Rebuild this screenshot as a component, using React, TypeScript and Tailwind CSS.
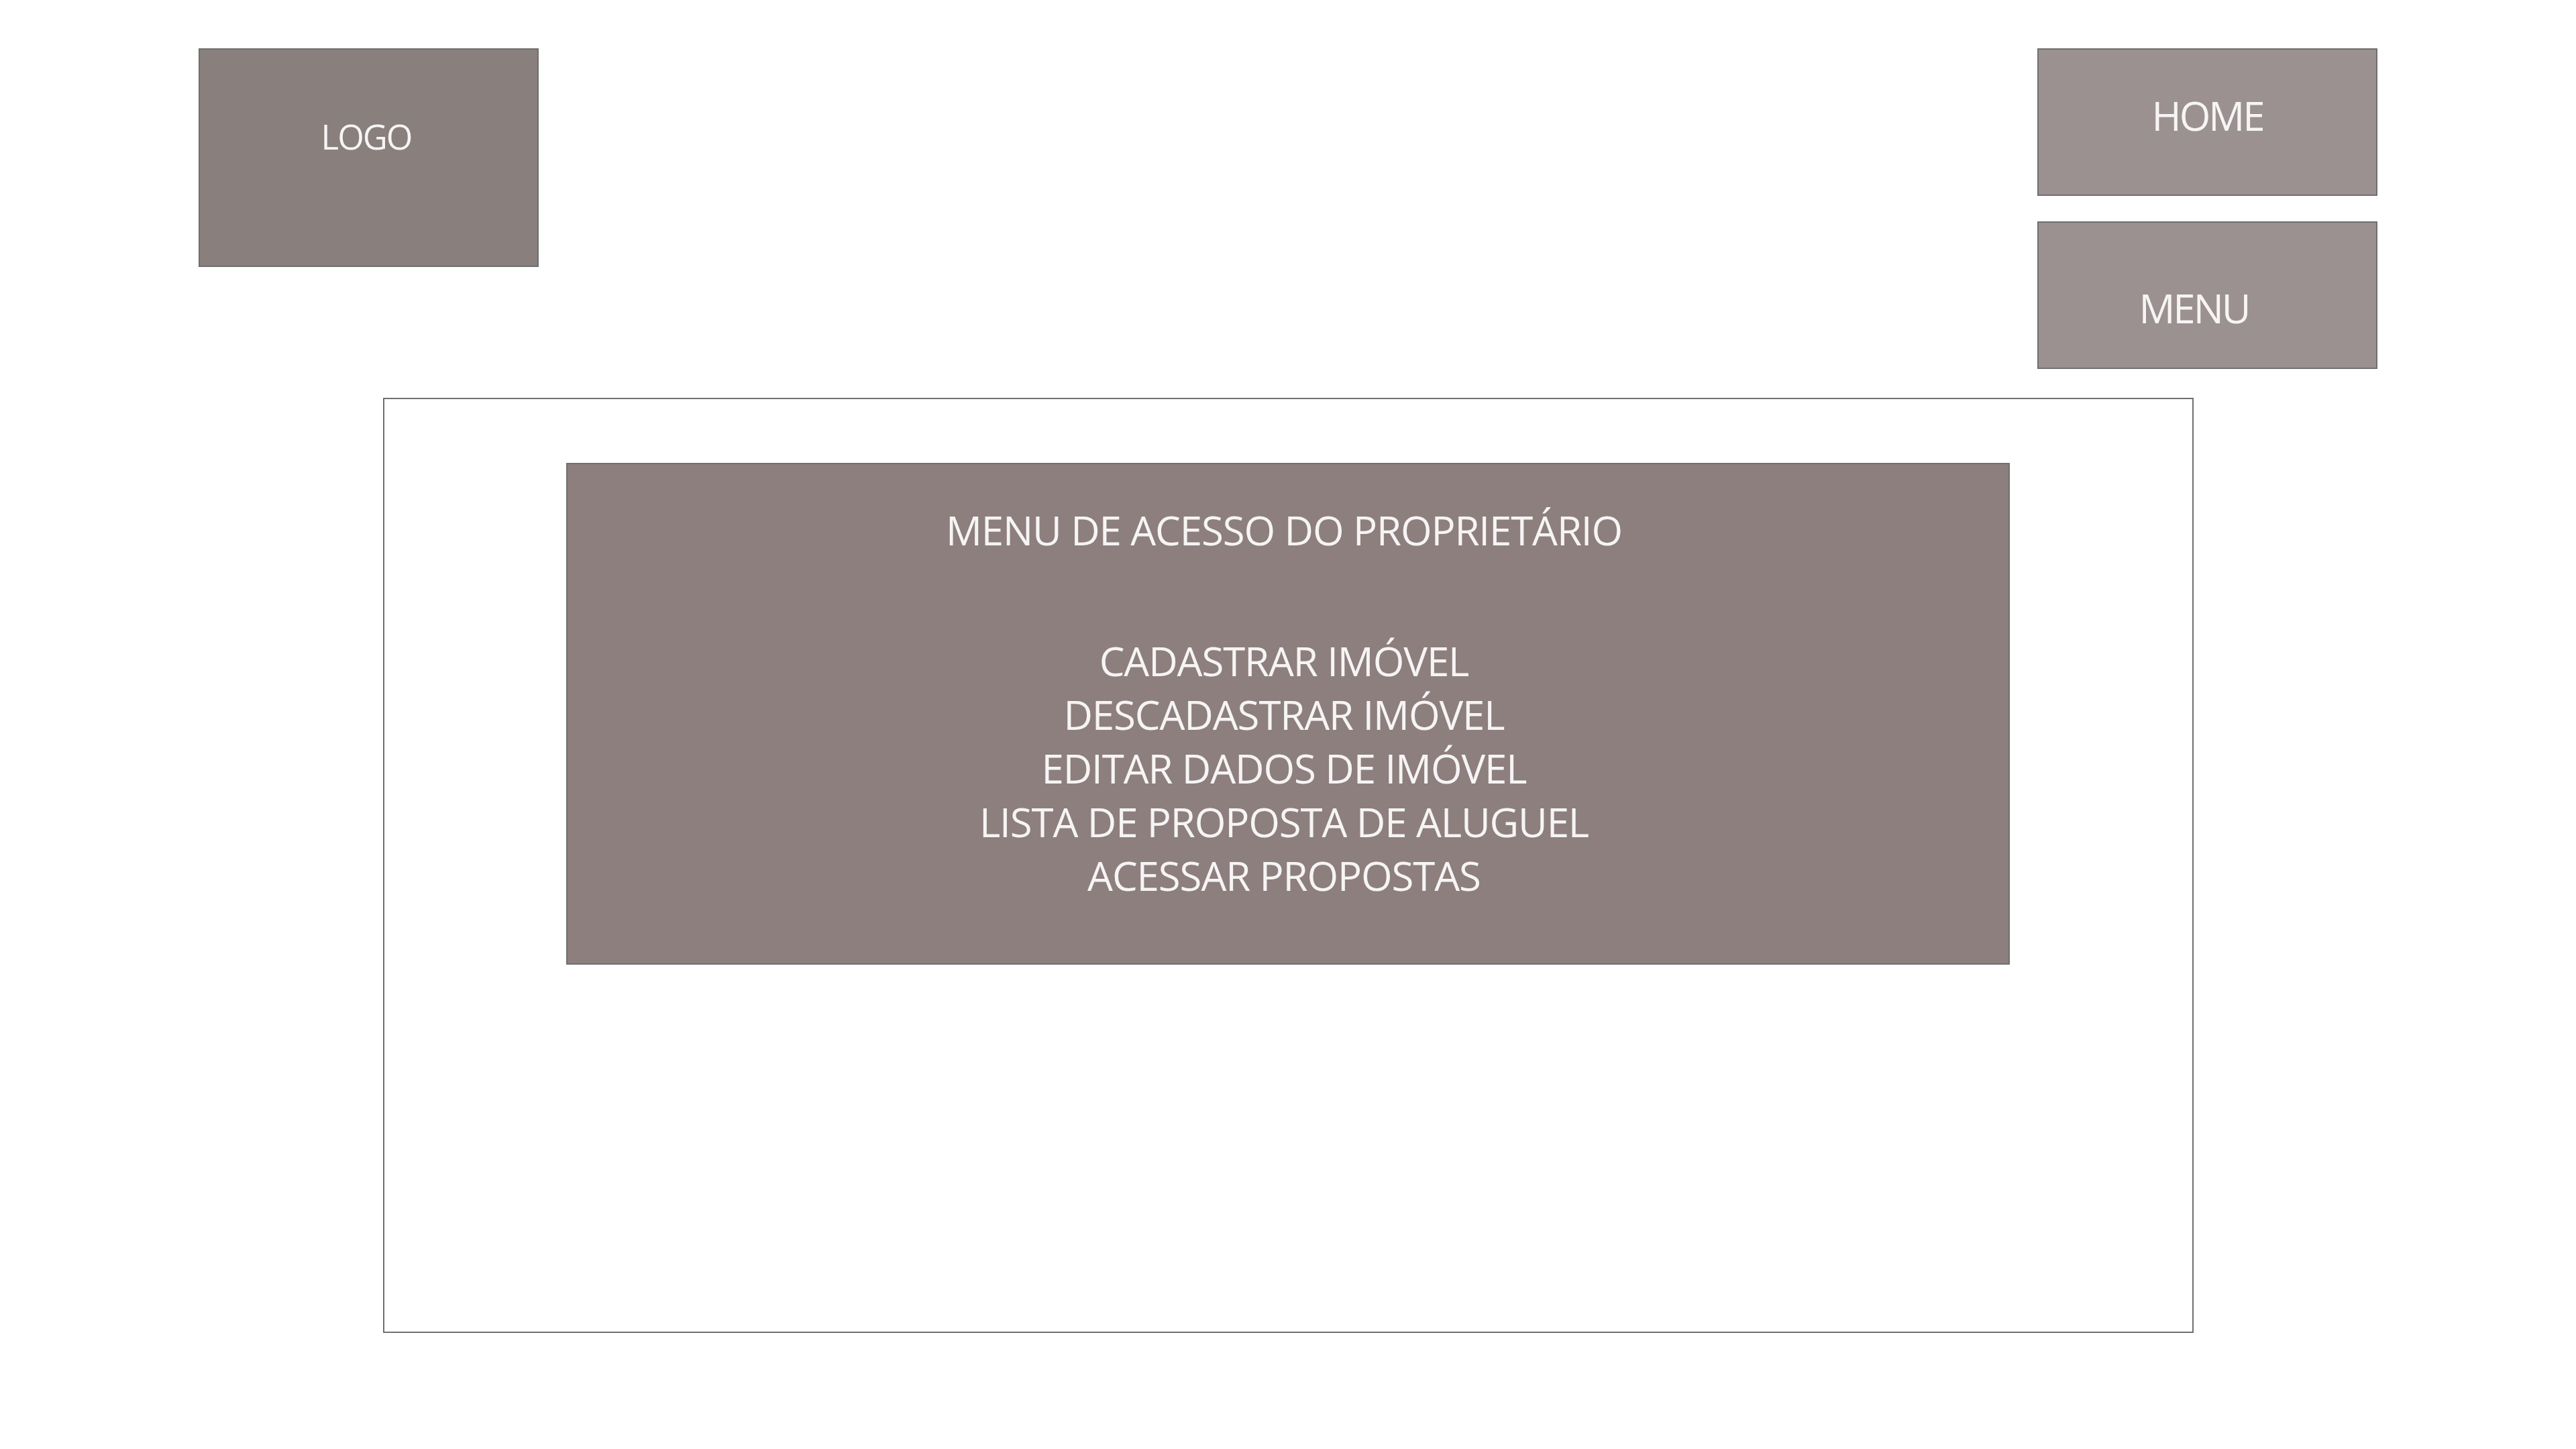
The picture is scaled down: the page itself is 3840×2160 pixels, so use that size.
import React from "react";

const font = { fontFamily: '"Open Sans", "Noto Sans", sans-serif' };

export default function App() {
  const items = [
    "CADASTRAR IMÓVEL",
    "DESCADASTRAR IMÓVEL",
    "EDITAR DADOS DE IMÓVEL",
    "LISTA DE PROPOSTA DE ALUGUEL",
    "ACESSAR PROPOSTAS",
  ];
  return (
    <div
      className="w-[3840px] h-[2160px] bg-white flex flex-col font-normal text-[#f6f4f4] tracking-[-0.07em]"
      style={font}
    >
      <header className="flex justify-between items-start px-[296px] pt-[72px]">
        <div className="w-[507px] h-[326px] bg-[#897f7d] border-2 border-[#6f6f6f] flex justify-center items-start pt-[95px] pr-[7px]">
          <span className="text-[51px] leading-[68px] tracking-[-0.04em]">LOGO</span>
        </div>
        <div className="flex flex-col gap-[38px]">
          <div className="w-[507px] h-[220px] bg-[#9a9190] border-2 border-[#6f6f6f] flex justify-center items-start pt-[58px]">
            <span className="text-[60px] leading-[80px] tracking-[-0.05em]">HOME</span>
          </div>
          <div className="w-[507px] h-[220px] bg-[#9a9190] border-2 border-[#6f6f6f] flex justify-center items-start pt-[87px] pr-[40px]">
            <span className="text-[60px] leading-[80px] tracking-[-0.05em]">MENU</span>
          </div>
        </div>
      </header>
      <main className="mt-[43px] mx-auto w-[2699px] h-[1394px] border-2 border-[#6f6f6f] flex justify-center items-start pt-[95px]">
        <section className="w-[2152px] h-[748px] bg-[#8d7f7e] border-2 border-[#6f6f6f] flex flex-col items-center pt-[58px] pr-[12px] text-[60px] leading-[80px]">
          <h1 className="font-normal">MENU DE ACESSO DO PROPRIETÁRIO</h1>
          <ul className="mt-[115px] flex flex-col items-center">
            {items.map((t) => (
              <li key={t}>{t}</li>
            ))}
          </ul>
        </section>
      </main>
    </div>
  );
}
